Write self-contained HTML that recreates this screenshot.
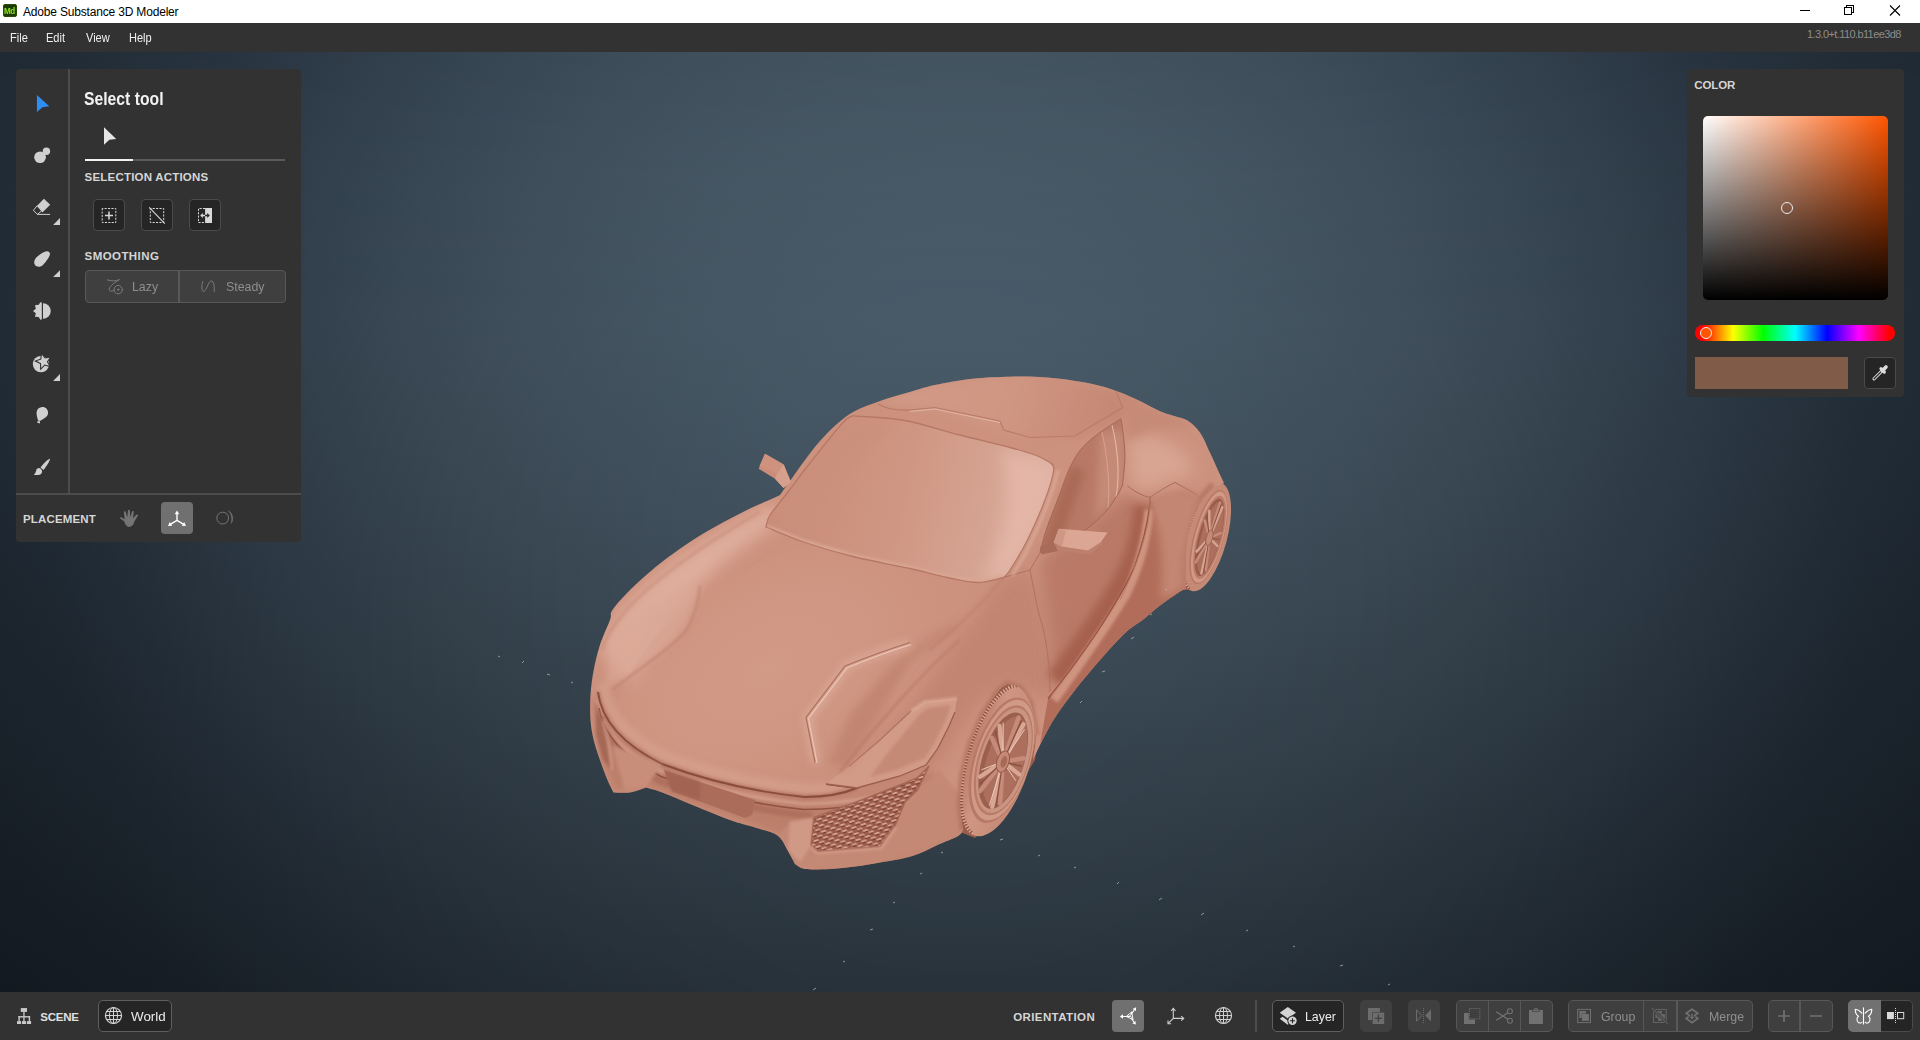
<!DOCTYPE html>
<html lang="en">
<head>
<meta charset="utf-8">
<title>Adobe Substance 3D Modeler</title>
<style>
*{box-sizing:border-box;margin:0;padding:0}
html,body{width:1920px;height:1040px;overflow:hidden;background:#323232;font-family:"Liberation Sans",sans-serif;}
body{position:relative}
.abs{position:absolute}
#titlebar{position:absolute;left:0;top:0;width:1920px;height:23px;background:#fff}
#titlebar .ttl{position:absolute;left:23px;top:4.5px;font-size:12px;line-height:14px;color:#000;white-space:nowrap;letter-spacing:-0.18px}
#menubar{position:absolute;left:0;top:23px;width:1920px;height:29px;background:#323232}
#menubar span{position:absolute;top:7.5px;font-size:12px;line-height:14px;color:#f0f0f0;white-space:nowrap;transform-origin:0 50%;transform:scaleX(0.92)}
#viewport{position:absolute;left:0;top:52px;width:1920px;height:940px;overflow:hidden;
 background:linear-gradient(to bottom,rgb(233,233,233) 0px,rgb(246,246,246) 120px,rgb(255,255,255) 280px),radial-gradient(circle 1200px at 960px 470px,rgb(255,255,255) 0px,rgb(246,246,246) 200px,rgb(237,237,237) 300px,rgb(226,226,226) 400px,rgb(212,212,212) 500px,rgb(191,194,197) 600px,rgb(169,173,180) 700px,rgb(145,150,159) 800px,rgb(121,128,137) 900px,rgb(108,115,125) 1000px,rgb(98,105,114) 1100px,rgb(91,97,106) 1200px),linear-gradient(to bottom,#566b7b 0%,#2f3b45 100%);background-blend-mode:multiply}
#bottombar{position:absolute;left:0;top:992px;width:1920px;height:48px;background:#323232}
.panel{position:absolute;background:#323232;border-radius:4px}
.lbl{position:absolute;font-weight:bold;font-size:11.5px;line-height:12px;letter-spacing:0px;color:#d6d6d6;white-space:nowrap}
.btn{position:absolute;width:32px;height:32px;border-radius:4px;background:#252525;border:1px solid #4b4b4b}
.seg{position:absolute;height:32px;background:#3f3f3f;border:1px solid #585858;border-radius:4px}
.txt{position:absolute;font-size:13px;line-height:16px;white-space:nowrap;transform-origin:0 50%;transform:scaleX(0.95)}
svg{position:absolute;overflow:visible}
</style>
</head>
<body>
<div id="titlebar">
  <div class="abs" style="left:3px;top:4px;width:14px;height:13px;border-radius:2px;background:#1c3a02;border:1px solid #2a4a08"></div>
  <div class="abs" style="left:4.3px;top:5.5px;font-size:8.5px;line-height:10px;font-weight:bold;color:#8fe31f;letter-spacing:-0.5px;transform-origin:0 50%;transform:scaleX(0.95)">Md</div>
  <div class="ttl">Adobe Substance 3D Modeler</div>
</div>
<div id="menubar">
  <span style="left:10px">File</span><span style="left:46px">Edit</span><span style="left:86px">View</span><span style="left:129px">Help</span>
  <span id="ver" style="left:1807px;top:4px;font-size:11px;color:#8c8c8c;letter-spacing:-0.6px;transform:none">1.3.0+t.110.b11ee3d8</span>
</div>
<div id="viewport">
<!--CAR-->
<svg id="car" width="1920" height="1040" viewBox="0 0 1920 1040" style="left:0;top:-52px">
<defs>
<filter id="b4" x="-20%" y="-20%" width="140%" height="140%"><feGaussianBlur stdDeviation="4"/></filter>
<filter id="b8" x="-30%" y="-30%" width="160%" height="160%"><feGaussianBlur stdDeviation="8"/></filter>
<filter id="b14" x="-40%" y="-40%" width="180%" height="180%"><feGaussianBlur stdDeviation="14"/></filter>
<filter id="b2" x="-20%" y="-20%" width="140%" height="140%"><feGaussianBlur stdDeviation="1.6"/></filter>
<clipPath id="bodyclip"><path d="M780.0 495.0C781.7 492.7 785.8 486.8 790.0 481.0C794.2 475.2 800.0 466.7 805.0 460.0C810.0 453.3 814.6 447.1 820.0 441.0C825.4 434.9 831.7 428.5 837.5 423.5C843.3 418.5 847.9 414.8 855.0 411.0C862.1 407.2 870.8 404.2 880.0 401.0C889.2 397.8 900.8 394.7 910.0 392.0C919.2 389.3 924.6 387.2 935.0 385.0C945.4 382.8 960.0 380.1 972.5 378.7C985.0 377.3 999.6 377.0 1010.0 376.7C1020.4 376.4 1026.7 376.4 1035.0 376.7C1043.3 377.0 1051.7 377.7 1060.0 378.7C1068.3 379.7 1076.7 380.8 1085.0 382.5C1093.3 384.2 1101.7 386.0 1110.0 388.7C1118.3 391.4 1126.7 394.9 1135.0 398.7C1143.3 402.4 1153.3 408.3 1160.0 411.2C1166.7 414.1 1170.4 414.6 1175.0 416.2C1179.6 417.8 1183.3 417.8 1187.5 420.5C1191.7 423.2 1196.2 427.2 1200.0 432.5C1203.8 437.8 1207.2 446.6 1210.0 452.5C1212.8 458.4 1214.7 462.9 1217.0 468.0C1219.3 473.1 1222.8 480.5 1224.0 483.0C1222.7 483.7 1219.5 484.3 1216.0 487.0C1212.5 489.7 1207.1 493.3 1203.0 499.0C1198.9 504.7 1194.2 513.2 1191.5 521.0C1188.8 528.8 1187.5 537.7 1186.5 546.0C1185.5 554.3 1185.6 563.8 1185.5 571.0C1185.4 578.2 1185.9 586.0 1186.0 589.0C1185.0 589.4 1184.3 588.8 1180.0 591.5C1175.7 594.2 1166.2 600.8 1160.0 605.5C1153.8 610.2 1148.3 615.4 1142.5 620.0C1136.7 624.6 1132.1 626.3 1125.0 633.0C1117.9 639.7 1108.3 650.5 1100.0 660.0C1091.7 669.5 1082.5 680.4 1075.0 690.0C1067.5 699.6 1060.4 709.2 1055.0 717.5C1049.6 725.8 1046.2 732.9 1042.5 740.0C1038.8 747.1 1034.6 756.7 1033.0 760.0C1033.5 755.0 1036.5 739.6 1036.0 730.0C1035.5 720.4 1032.7 709.5 1030.0 702.5C1027.3 695.5 1023.8 691.1 1020.0 688.0C1016.2 684.9 1009.6 684.7 1007.5 684.0C1006.1 685.1 1003.2 685.3 999.0 690.5C994.8 695.7 987.3 705.9 982.5 715.0C977.7 724.1 973.3 735.0 970.0 745.0C966.7 755.0 964.2 765.0 962.5 775.0C960.8 785.0 959.9 795.8 960.0 805.0C960.1 814.2 962.5 825.8 963.0 830.0C962.2 831.0 962.2 833.5 958.0 836.0C953.8 838.5 945.1 841.7 937.5 845.0C929.9 848.3 922.1 853.1 912.5 856.0C902.9 858.9 889.6 860.8 880.0 862.5C870.4 864.2 863.3 865.4 855.0 866.5C846.7 867.6 838.3 868.6 830.0 869.0C821.7 869.4 810.8 869.8 805.0 869.0C799.2 868.2 796.7 864.8 795.0 864.0C793.8 861.7 790.4 854.8 787.5 850.0C784.6 845.2 782.9 839.2 777.5 835.5C772.1 831.8 762.9 830.1 755.0 827.5C747.1 824.9 740.4 823.8 730.0 820.0C719.6 816.2 703.8 809.6 692.5 805.0C681.2 800.4 670.2 795.4 662.5 792.5C654.8 789.6 648.8 788.3 646.0 787.5C643.3 788.3 635.4 791.7 630.0 792.5C624.6 793.3 616.2 792.5 613.5 792.5C612.5 790.4 609.8 785.4 607.5 780.0C605.2 774.6 602.3 766.7 600.0 760.0C597.7 753.3 595.3 746.7 593.7 740.0C592.1 733.3 591.0 727.5 590.5 720.0C590.0 712.5 590.0 703.3 590.5 695.0C591.0 686.7 592.1 678.3 593.7 670.0C595.3 661.7 597.3 653.3 600.0 645.0C602.7 636.7 607.9 625.8 610.0 620.0C612.1 614.2 609.2 615.0 612.5 610.0C615.8 605.0 622.9 597.1 630.0 590.0C637.1 582.9 646.7 574.4 655.0 567.5C663.3 560.6 671.7 554.5 680.0 548.7C688.3 542.9 696.7 537.5 705.0 532.5C713.3 527.5 721.7 523.1 730.0 518.7C738.3 514.3 747.5 509.7 755.0 506.2C762.5 502.7 770.8 499.4 775.0 497.5C779.2 495.6 779.2 495.4 780.0 495.0Z"/></clipPath>
<clipPath id="windclip"><path d="M766.0 527.0C766.7 525.0 766.3 520.8 770.0 515.0C773.7 509.2 781.3 500.7 788.0 492.0C794.7 483.3 800.5 474.9 810.0 463.0C819.5 451.1 837.1 428.3 845.0 420.5C852.9 412.7 855.4 416.9 857.5 416.2C862.1 416.5 876.2 417.1 885.0 418.0C893.8 418.9 897.5 418.7 910.0 421.5C922.5 424.3 943.3 430.7 960.0 435.0C976.7 439.3 997.5 444.2 1010.0 447.5C1022.5 450.8 1028.3 452.5 1035.0 455.0C1041.7 457.5 1047.5 461.2 1050.0 462.5C1050.6 463.8 1054.5 463.8 1053.7 470.0C1052.9 476.2 1049.4 488.3 1045.0 500.0C1040.6 511.7 1033.3 528.3 1027.5 540.0C1021.7 551.7 1014.0 563.8 1010.0 570.0C1006.0 576.2 1004.8 576.2 1003.7 577.5C999.3 578.3 986.9 582.5 977.5 582.5C968.1 582.5 958.8 579.8 947.5 577.5C936.2 575.2 925.4 571.9 910.0 568.5C894.6 565.1 872.5 561.3 855.0 557.0C837.5 552.7 819.8 547.5 805.0 542.5C790.2 537.5 772.5 529.6 766.0 527.0Z"/></clipPath>
<clipPath id="winclip"><path d="M1121.0 418.7C1117.5 421.0 1106.4 427.7 1100.0 432.5C1093.6 437.3 1087.5 441.7 1082.5 447.5C1077.5 453.3 1074.2 458.8 1070.0 467.5C1065.8 476.2 1061.5 489.6 1057.5 500.0C1053.5 510.4 1049.1 521.2 1046.2 530.0C1043.3 538.8 1041.0 548.8 1040.0 552.5C1042.5 551.2 1047.5 548.8 1055.0 545.0C1062.5 541.2 1076.7 535.4 1085.0 530.0C1093.3 524.6 1099.6 518.3 1105.0 512.5C1110.4 506.7 1114.6 499.6 1117.5 495.0C1120.4 490.4 1121.7 486.7 1122.5 485.0C1122.9 480.4 1124.9 466.2 1125.0 457.5C1125.1 448.8 1123.7 439.0 1123.0 432.5C1122.3 426.0 1121.3 421.0 1121.0 418.7Z"/></clipPath>
<pattern id="mesh" width="10" height="6.400" patternUnits="userSpaceOnUse" patternTransform="rotate(-19)">
<rect width="10" height="6.400" fill="#9c5d4c"/>
<path d="M0.500 1.300h4.500M5.500 4.500h4.500" stroke="#dfae9b" stroke-width="1.700"/>
<path d="M0.500 2.800h4.500M5.500 6h4.500" stroke="#713b2c" stroke-width="1.200"/>
<path d="M5.200 0.500v2.700M0.200 3.700v2.700" stroke="#c98f7b" stroke-width="0.900"/>
</pattern>
<radialGradient id="hoodg" cx="0.450" cy="0.450" r="0.600"><stop offset="0" stop-color="#d29b87"/><stop offset="0.500" stop-color="#d09884" stop-opacity="0.8"/><stop offset="1" stop-color="#cc927e" stop-opacity="0"/></radialGradient>
<linearGradient id="windg" gradientUnits="userSpaceOnUse" x1="790" y1="470" x2="1040" y2="530"><stop offset="0" stop-color="#c98d79"/><stop offset="0.450" stop-color="#cf9783"/><stop offset="0.800" stop-color="#d6a493"/><stop offset="1" stop-color="#dfb2a3"/></linearGradient>
<linearGradient id="roofg" gradientUnits="userSpaceOnUse" x1="900" y1="380" x2="1120" y2="440"><stop offset="0" stop-color="#d29b87"/><stop offset="0.500" stop-color="#cf9682"/><stop offset="1" stop-color="#c38672"/></linearGradient>
<linearGradient id="tireg" x1="0" y1="0" x2="1" y2="0"><stop offset="0" stop-color="#b97b68"/><stop offset="0.350" stop-color="#cf9783"/><stop offset="1" stop-color="#c38672"/></linearGradient>
</defs>
<path d="M1224 483L1213 484L1196 500L1186 530L1183 560L1185 590L1200 590L1215 560L1226 510Z" fill="#96594a"/>
<path d="M1007 683L1031 690L1041 720L1035 760L1010 800L975 838L960 832L957 800L961 770L969 742L981 714L998 689Z" fill="#9a5d4c"/>
<g transform="translate(2 0) rotate(15 1204.500 537)">
<ellipse cx="1204.500" cy="537" rx="20.500" ry="56" fill="#c58a76"/>
<clipPath id="treadclip2"><rect x="1180" y="478" width="22" height="120"/></clipPath>
<g clip-path="url(#treadclip2)">
<ellipse cx="1204.500" cy="537" rx="19.500" ry="55" fill="none" stroke="#8d5141" stroke-width="2.600" stroke-dasharray="1.200 1.500"/>
<ellipse cx="1204.500" cy="537" rx="19.500" ry="55" fill="none" stroke="#dfb09f" stroke-width="2.600" stroke-dasharray="0.600 2.100" stroke-dashoffset="-1.400"/>
</g>
<ellipse cx="1206.500" cy="536.500" rx="15" ry="48.500" fill="#b67865"/>
<ellipse cx="1207" cy="536.500" rx="14" ry="47" fill="#d09a86"/>
<ellipse cx="1207.500" cy="536.500" rx="12.500" ry="43" fill="#bb7d6a"/>
<ellipse cx="1207.500" cy="536.500" rx="11" ry="40" fill="#9a5d4c"/>
<ellipse cx="1208.500" cy="536.500" rx="9.500" ry="37" fill="#ad6f5d"/>
<path d="M1207.5 537L1208.6 500.2" stroke="#c58b78" stroke-width="2.6" stroke-linecap="round" fill="none"/>
<path d="M1207.5 537L1212.1 504.1" stroke="#d6a592" stroke-width="2.4" stroke-linecap="round" fill="none"/>
<path d="M1207.5 537L1210.4 501.6" stroke="#8a4e3e" stroke-width="0.900" fill="none"/>
<path d="M1207.5 537L1217.3 529.6" stroke="#c58b78" stroke-width="2.6" stroke-linecap="round" fill="none"/>
<path d="M1207.5 537L1217.4 542.9" stroke="#d6a592" stroke-width="2.4" stroke-linecap="round" fill="none"/>
<path d="M1207.5 537L1217.5 536.3" stroke="#8a4e3e" stroke-width="0.900" fill="none"/>
<path d="M1207.5 537L1212.4 569.2" stroke="#c58b78" stroke-width="2.6" stroke-linecap="round" fill="none"/>
<path d="M1207.5 537L1209.0 573.6" stroke="#d6a592" stroke-width="2.4" stroke-linecap="round" fill="none"/>
<path d="M1207.5 537L1210.8 572.0" stroke="#8a4e3e" stroke-width="0.900" fill="none"/>
<path d="M1207.5 537L1200.7 564.3" stroke="#c58b78" stroke-width="2.6" stroke-linecap="round" fill="none"/>
<path d="M1207.5 537L1198.6 553.7" stroke="#d6a592" stroke-width="2.4" stroke-linecap="round" fill="none"/>
<path d="M1207.5 537L1199.5 559.3" stroke="#8a4e3e" stroke-width="0.900" fill="none"/>
<path d="M1207.5 537L1198.4 521.6" stroke="#c58b78" stroke-width="2.6" stroke-linecap="round" fill="none"/>
<path d="M1207.5 537L1200.4 510.8" stroke="#d6a592" stroke-width="2.4" stroke-linecap="round" fill="none"/>
<path d="M1207.5 537L1199.3 515.9" stroke="#8a4e3e" stroke-width="0.900" fill="none"/>
<ellipse cx="1207.5" cy="537" rx="3.200" ry="8" fill="#c48a76" stroke="#96594a" stroke-width="0.800"/>
</g>
<g transform="rotate(17 997.500 760.500)">
<ellipse cx="998" cy="760" rx="32" ry="79" fill="url(#tireg)"/>
<clipPath id="treadclip"><rect x="955" y="680" width="40" height="160"/></clipPath>
<g clip-path="url(#treadclip)">
<ellipse cx="998" cy="760" rx="30.500" ry="77.500" fill="none" stroke="#8d5141" stroke-width="3.500" stroke-dasharray="1.300 1.700"/>
<ellipse cx="998" cy="760" rx="30.500" ry="77.500" fill="none" stroke="#e0b2a1" stroke-width="3.500" stroke-dasharray="0.700 2.300" stroke-dashoffset="-1.500"/>
</g>
<ellipse cx="1001.500" cy="759" rx="28.500" ry="65" fill="#b87a67"/>
<ellipse cx="1002.500" cy="758.500" rx="27" ry="62.500" fill="#d09a86"/>
<ellipse cx="1003" cy="758.500" rx="25.500" ry="57" fill="#b97b68"/>
<ellipse cx="1003.500" cy="758.500" rx="24" ry="54.500" fill="#c99480"/>
<ellipse cx="1003" cy="759" rx="21" ry="50" fill="#9c5f4e"/>
<ellipse cx="1005" cy="759" rx="18.500" ry="46.500" fill="#ad6f5d"/>
<path d="M1003 760L1005.2 713.3" stroke="#c58b78" stroke-width="4.5" stroke-linecap="round" fill="none"/>
<path d="M1003 760L1011.9 718.2" stroke="#d8a794" stroke-width="4.2" stroke-linecap="round" fill="none"/>
<path d="M1003 760L1008.7 715.0" stroke="#8a4e3e" stroke-width="1.300" fill="none"/>
<path d="M1003 760L1014.3 722.9" stroke="#edc9bc" stroke-width="0.900" fill="none"/>
<path d="M1003 760L1022.1 750.7" stroke="#c58b78" stroke-width="4.5" stroke-linecap="round" fill="none"/>
<path d="M1003 760L1022.3 767.5" stroke="#d8a794" stroke-width="4.2" stroke-linecap="round" fill="none"/>
<path d="M1003 760L1022.5 759.1" stroke="#8a4e3e" stroke-width="1.300" fill="none"/>
<path d="M1003 760L1021.0 774.5" stroke="#edc9bc" stroke-width="0.900" fill="none"/>
<path d="M1003 760L1012.6 800.9" stroke="#c58b78" stroke-width="4.5" stroke-linecap="round" fill="none"/>
<path d="M1003 760L1006.0 806.4" stroke="#d8a794" stroke-width="4.2" stroke-linecap="round" fill="none"/>
<path d="M1003 760L1009.4 804.4" stroke="#8a4e3e" stroke-width="1.300" fill="none"/>
<path d="M1003 760L1002.9 806.0" stroke="#edc9bc" stroke-width="0.900" fill="none"/>
<path d="M1003 760L989.8 794.6" stroke="#c58b78" stroke-width="4.5" stroke-linecap="round" fill="none"/>
<path d="M1003 760L985.6 781.2" stroke="#d8a794" stroke-width="4.2" stroke-linecap="round" fill="none"/>
<path d="M1003 760L987.5 788.4" stroke="#8a4e3e" stroke-width="1.300" fill="none"/>
<path d="M1003 760L984.9 774.0" stroke="#edc9bc" stroke-width="0.900" fill="none"/>
<path d="M1003 760L985.3 740.5" stroke="#c58b78" stroke-width="4.5" stroke-linecap="round" fill="none"/>
<path d="M1003 760L989.3 726.7" stroke="#d8a794" stroke-width="4.2" stroke-linecap="round" fill="none"/>
<path d="M1003 760L987.0 733.1" stroke="#8a4e3e" stroke-width="1.300" fill="none"/>
<path d="M1003 760L991.9 722.6" stroke="#edc9bc" stroke-width="0.900" fill="none"/>
<ellipse cx="1003" cy="760" rx="6" ry="11" fill="#c48a76" stroke="#96594a" stroke-width="1"/>
<ellipse cx="1004" cy="760" rx="3" ry="6" fill="#a86a58"/>
</g>
<path d="M780.0 495.0C781.7 492.7 785.8 486.8 790.0 481.0C794.2 475.2 800.0 466.7 805.0 460.0C810.0 453.3 814.6 447.1 820.0 441.0C825.4 434.9 831.7 428.5 837.5 423.5C843.3 418.5 847.9 414.8 855.0 411.0C862.1 407.2 870.8 404.2 880.0 401.0C889.2 397.8 900.8 394.7 910.0 392.0C919.2 389.3 924.6 387.2 935.0 385.0C945.4 382.8 960.0 380.1 972.5 378.7C985.0 377.3 999.6 377.0 1010.0 376.7C1020.4 376.4 1026.7 376.4 1035.0 376.7C1043.3 377.0 1051.7 377.7 1060.0 378.7C1068.3 379.7 1076.7 380.8 1085.0 382.5C1093.3 384.2 1101.7 386.0 1110.0 388.7C1118.3 391.4 1126.7 394.9 1135.0 398.7C1143.3 402.4 1153.3 408.3 1160.0 411.2C1166.7 414.1 1170.4 414.6 1175.0 416.2C1179.6 417.8 1183.3 417.8 1187.5 420.5C1191.7 423.2 1196.2 427.2 1200.0 432.5C1203.8 437.8 1207.2 446.6 1210.0 452.5C1212.8 458.4 1214.7 462.9 1217.0 468.0C1219.3 473.1 1222.8 480.5 1224.0 483.0C1222.7 483.7 1219.5 484.3 1216.0 487.0C1212.5 489.7 1207.1 493.3 1203.0 499.0C1198.9 504.7 1194.2 513.2 1191.5 521.0C1188.8 528.8 1187.5 537.7 1186.5 546.0C1185.5 554.3 1185.6 563.8 1185.5 571.0C1185.4 578.2 1185.9 586.0 1186.0 589.0C1185.0 589.4 1184.3 588.8 1180.0 591.5C1175.7 594.2 1166.2 600.8 1160.0 605.5C1153.8 610.2 1148.3 615.4 1142.5 620.0C1136.7 624.6 1132.1 626.3 1125.0 633.0C1117.9 639.7 1108.3 650.5 1100.0 660.0C1091.7 669.5 1082.5 680.4 1075.0 690.0C1067.5 699.6 1060.4 709.2 1055.0 717.5C1049.6 725.8 1046.2 732.9 1042.5 740.0C1038.8 747.1 1034.6 756.7 1033.0 760.0C1033.5 755.0 1036.5 739.6 1036.0 730.0C1035.5 720.4 1032.7 709.5 1030.0 702.5C1027.3 695.5 1023.8 691.1 1020.0 688.0C1016.2 684.9 1009.6 684.7 1007.5 684.0C1006.1 685.1 1003.2 685.3 999.0 690.5C994.8 695.7 987.3 705.9 982.5 715.0C977.7 724.1 973.3 735.0 970.0 745.0C966.7 755.0 964.2 765.0 962.5 775.0C960.8 785.0 959.9 795.8 960.0 805.0C960.1 814.2 962.5 825.8 963.0 830.0C962.2 831.0 962.2 833.5 958.0 836.0C953.8 838.5 945.1 841.7 937.5 845.0C929.9 848.3 922.1 853.1 912.5 856.0C902.9 858.9 889.6 860.8 880.0 862.5C870.4 864.2 863.3 865.4 855.0 866.5C846.7 867.6 838.3 868.6 830.0 869.0C821.7 869.4 810.8 869.8 805.0 869.0C799.2 868.2 796.7 864.8 795.0 864.0C793.8 861.7 790.4 854.8 787.5 850.0C784.6 845.2 782.9 839.2 777.5 835.5C772.1 831.8 762.9 830.1 755.0 827.5C747.1 824.9 740.4 823.8 730.0 820.0C719.6 816.2 703.8 809.6 692.5 805.0C681.2 800.4 670.2 795.4 662.5 792.5C654.8 789.6 648.8 788.3 646.0 787.5C643.3 788.3 635.4 791.7 630.0 792.5C624.6 793.3 616.2 792.5 613.5 792.5C612.5 790.4 609.8 785.4 607.5 780.0C605.2 774.6 602.3 766.7 600.0 760.0C597.7 753.3 595.3 746.7 593.7 740.0C592.1 733.3 591.0 727.5 590.5 720.0C590.0 712.5 590.0 703.3 590.5 695.0C591.0 686.7 592.1 678.3 593.7 670.0C595.3 661.7 597.3 653.3 600.0 645.0C602.7 636.7 607.9 625.8 610.0 620.0C612.1 614.2 609.2 615.0 612.5 610.0C615.8 605.0 622.9 597.1 630.0 590.0C637.1 582.9 646.7 574.4 655.0 567.5C663.3 560.6 671.7 554.5 680.0 548.7C688.3 542.9 696.7 537.5 705.0 532.5C713.3 527.5 721.7 523.1 730.0 518.7C738.3 514.3 747.5 509.7 755.0 506.2C762.5 502.7 770.8 499.4 775.0 497.5C779.2 495.6 779.2 495.4 780.0 495.0Z" fill="#cc927e"/>
<g clip-path="url(#bodyclip)">
<path d="M600 650C615 600 680 550 770 505L790 515C720 560 660 610 640 690Z" fill="#dfae9c" filter="url(#b8)"/>
<ellipse cx="790" cy="670" rx="190" ry="110" transform="rotate(-28 790 670)" fill="url(#hoodg)"/>
<path d="M700 585C695 610 685 635 660 655C640 668 620 680 605 690L612 640C640 610 670 590 700 585Z" fill="#dba896" filter="url(#b4)" opacity="0.7"/>
<path d="M1003 578L1030 570L1040 600L1050 660L1050 700L1010 684L980 700L940 760L900 790L830 800L900 720L960 640Z" fill="#c08370" filter="url(#b8)" opacity="0.85"/>
<path d="M1040 560L1125 495L1150 497L1146 530L1135 566L1120 595L1096 633L1072 670L1050 698L1050 640Z" fill="#b97966" filter="url(#b8)"/>
<path d="M1146 505C1146 530 1138 560 1122 588C1108 612 1085 645 1058 682" fill="none" stroke="#a6614d" stroke-width="26" filter="url(#b4)"/>
<path d="M1152 500L1185 492L1200 498L1186 545L1184 590L1160 603L1140 625L1135 580Z" fill="#bb7b67" filter="url(#b4)"/>
<path d="M1165 560L1184 548L1184 590L1160 604Z" fill="#a8634f" filter="url(#b4)"/>
<path d="M1150 497L1144 530L1135 566L1120 595L1096 633L1072 670L1048 699L1040 745L1060 722L1085 692L1113 661L1140 629L1164 602L1186 590L1175 560Z" fill="#b16d59"/>
<path d="M1149 510C1147 535 1140 566 1126 594C1112 618 1090 650 1054 700" fill="none" stroke="#cf9480" stroke-width="9" filter="url(#b2)"/>
<path d="M1150.300 496.500C1149 520 1144 540 1134.700 566.200C1128 582 1118 600 1096.200 633.500C1085 650 1072 669 1048 698.500" fill="none" stroke="#96523f" stroke-width="1.300"/>
<path d="M1130 440C1150 430 1180 440 1195 470C1185 480 1160 480 1140 495C1130 480 1128 455 1130 440Z" fill="#d8a592" filter="url(#b8)"/>
<path d="M880 401L935 385L1010 376L1085 382L1135 398L1122 420L1075 440L1030 440L1003 430L935 408Z" fill="url(#roofg)" filter="url(#b4)"/>
<path d="M1116 391L1135 398L1175 416L1195 428L1150 430L1127 440L1122.500 407.500Z" fill="#c68b77" filter="url(#b4)"/>
<path d="M590 700L600 760L614 793L646 788L700 808L780 836L796 865L830 869L900 860L960 836L960 800L930 770L900 790L830 800L760 796L700 782L650 760L610 730L598 700Z" fill="#bc7f6b" filter="url(#b4)"/>
<path d="M602 684C606 716 633 740 665 756C707 772 757 784 806 789C830 789 845 785 857 780" stroke="#dcab98" stroke-width="6" fill="none" filter="url(#b4)" opacity="0.8"/>
<path d="M598 692C602 725 630 748 662 764C705 780 755 792 805 797C830 797 845 793 857 788" stroke="#a66856" stroke-width="3.500" fill="none" filter="url(#b2)" opacity="0.7"/>
<path d="M597 700C601 733 629 756 661 771C704 787 754 799 804 804C840 804 870 799 900 790" stroke="#dba996" stroke-width="2.200" fill="none" filter="url(#b2)"/>
<path d="M601 716C607 746 633 767 663 782C705 798 755 810 805 815L812 816" stroke="#ad6e5b" stroke-width="7" fill="none" filter="url(#b2)" opacity="0.9"/>
<path d="M598 692C602 725 630 748 662 764C705 780 755 792 805 797C830 797 845 793 857 788L826 784" stroke="#8a4d3c" stroke-width="1.900" fill="none"/>
<path d="M599 708C604 740 631 761 661 776.500C704 792.500 754 804.500 804 809.500C830 809.500 850 807.500 875 801" stroke="#8f5241" stroke-width="1.500" fill="none"/>
<path d="M664 770L755 800L752 815L745 818L672 791Z" fill="#ab6c5a"/>
<path d="M664 770L700 782L700 800L672 791Z" fill="#a36453" filter="url(#b2)"/>
<path d="M596 700L607 738L612 770L603 760L596 735Z" fill="#a56755" filter="url(#b2)"/>
<path d="M603 720L609 745L612 770" stroke="#dfb09e" stroke-width="1.500" fill="none" filter="url(#b2)"/>
<path d="M612 745L625 790L646 787L662 765Z" fill="#c88e7a" filter="url(#b2)"/>
<path d="M778 836L796 865L830 869L880 862L905 855L960 835L962 800L940 770L905 800L895 826L880 847L818 852L811 845L813 818L790 822Z" fill="#c48975" filter="url(#b2)"/>
<path d="M790 822L813 818L811 845L800 862L788 850Z" fill="#d09986" filter="url(#b2)"/>
<path d="M814 817.500L855 802.500L905 783L917 778L929 766L917.500 790L905 802L895 826L880 846.500L817.500 851.500L811 845Z" fill="url(#mesh)"/>
<path d="M814 817.500L855 802.500L905 783L917 778L929 766L917.500 790L905 802L895 826L880 846.500L817.500 851.500L811 845Z" fill="none" stroke="#a56755" stroke-width="1.400"/>
<path d="M811 846L817 853L881 848L896 827" fill="none" stroke="#dcab98" stroke-width="1.600" filter="url(#b2)"/>
<path d="M826 784L849 766.500L880 740L911 711L925 701.500L957 698L955 712L949 726L938 748L926 765L900 776L857 788Z" fill="#d29b87"/>
<path d="M911 711L925 701.500L957 698" fill="none" stroke="#e3b5a4" stroke-width="1.600" filter="url(#b2)"/>
<path d="M918 716L928 708L951 705L945 722L935 742L925 758L896 770L870 777L890 750Z" fill="#c58a76" filter="url(#b2)"/>
<path d="M826 784L857 788L900 776L926 765L938 748L949 726L955 712" fill="none" stroke="#9d5f4d" stroke-width="1.300"/>
<path d="M849 766.500L880 740L911 711" fill="none" stroke="#b07260" stroke-width="1.100"/>
<path d="M965 622L911 661L872 726L849 766L828 764L850 715L890 668L940 630Z" fill="#c08470" filter="url(#b4)" opacity="0.9"/>
<path d="M910 643C880 652 860 660 847 666L808 718L816 763" fill="none" stroke="#dcab99" stroke-width="9" filter="url(#b4)" opacity="0.85"/>
<path d="M910 642.500C880 652 860 660 845 666L806 717.500L815 762.500" fill="none" stroke="#ad6f5c" stroke-width="1.200"/>
<path d="M911 644.500C881 654 861 662 847 668L808.500 718.500L817 763" fill="none" stroke="#ecc6b8" stroke-width="1.200"/>
<path d="M960 640C930 665 880 720 840 772" fill="none" stroke="#b37561" stroke-width="1.600" filter="url(#b2)"/>
<path d="M1003 578C985 600 960 625 930 650" fill="none" stroke="#b37561" stroke-width="1.200" filter="url(#b2)" opacity="0.7"/>
<path d="M700 585C699 600 696 612 688 628C676 645 640 668 612 690" fill="none" stroke="#b97b68" stroke-width="1.400" filter="url(#b2)"/>
<path d="M602 650C612 615 660 570 760 512" fill="none" stroke="#b97c69" stroke-width="1.200" filter="url(#b2)" opacity="0.8"/>
<path d="M1036 735L1030 702.500L1020 688L1007.500 684L999 690.500L982.500 715L970 745L962.500 775L960 805L963 830" fill="none" stroke="#b27461" stroke-width="7" filter="url(#b2)" opacity="0.8"/>
<path d="M1184 590L1185.500 545L1190.500 520L1201 497.500L1213 484" fill="none" stroke="#b27461" stroke-width="6" filter="url(#b2)" opacity="0.8"/>
<path d="M1030 570C1034 590 1037 610 1043 628C1048 650 1050 672 1050 692" fill="none" stroke="#b07260" stroke-width="1"/>
<path d="M1003.700 577.500L1030 570L1040 553" fill="none" stroke="#b07260" stroke-width="1"/>
<path d="M1127.500 486C1135 492 1143 496 1150 497.500C1158 492 1167 486 1175 482.500L1197.500 495" fill="none" stroke="#a96b59" stroke-width="1"/>
<path d="M1150 497.500C1152 520 1140 560 1120 600" fill="none" stroke="#b47663" stroke-width="1" opacity="0.8"/>
<path d="M1150 500C1165 490 1185 490 1200 497L1186 545L1184 590L1160 600C1165 560 1160 530 1150 500Z" fill="#c38672" filter="url(#b4)"/>
</g>
<path d="M766.0 527.0C766.7 525.0 766.3 520.8 770.0 515.0C773.7 509.2 781.3 500.7 788.0 492.0C794.7 483.3 800.5 474.9 810.0 463.0C819.5 451.1 837.1 428.3 845.0 420.5C852.9 412.7 855.4 416.9 857.5 416.2C862.1 416.5 876.2 417.1 885.0 418.0C893.8 418.9 897.5 418.7 910.0 421.5C922.5 424.3 943.3 430.7 960.0 435.0C976.7 439.3 997.5 444.2 1010.0 447.5C1022.5 450.8 1028.3 452.5 1035.0 455.0C1041.7 457.5 1047.5 461.2 1050.0 462.5C1050.6 463.8 1054.5 463.8 1053.7 470.0C1052.9 476.2 1049.4 488.3 1045.0 500.0C1040.6 511.7 1033.3 528.3 1027.5 540.0C1021.7 551.7 1014.0 563.8 1010.0 570.0C1006.0 576.2 1004.8 576.2 1003.7 577.5C999.3 578.3 986.9 582.5 977.5 582.5C968.1 582.5 958.8 579.8 947.5 577.5C936.2 575.2 925.4 571.9 910.0 568.5C894.6 565.1 872.5 561.3 855.0 557.0C837.5 552.7 819.8 547.5 805.0 542.5C790.2 537.5 772.5 529.6 766.0 527.0Z" fill="url(#windg)"/>
<g clip-path="url(#windclip)">
<path d="M1000 450C1030 455 1050 465 1053 472L1040 520L1010 575L985 582C1005 540 1015 500 1000 450Z" fill="#e3b6a7" filter="url(#b8)"/>
<path d="M770 515L850 420L900 420C860 450 820 500 800 545Z" fill="#ca907c" filter="url(#b8)"/>
<path d="M766 527L805 542.500L855 557L910 568.500L947.500 577.500L977.500 582.500L1003.700 577.500" fill="none" stroke="#d9a793" stroke-width="5" filter="url(#b2)"/>
</g>
<path d="M766.0 527.0C766.7 525.0 766.3 520.8 770.0 515.0C773.7 509.2 781.3 500.7 788.0 492.0C794.7 483.3 800.5 474.9 810.0 463.0C819.5 451.1 837.1 428.3 845.0 420.5C852.9 412.7 855.4 416.9 857.5 416.2C862.1 416.5 876.2 417.1 885.0 418.0C893.8 418.9 897.5 418.7 910.0 421.5C922.5 424.3 943.3 430.7 960.0 435.0C976.7 439.3 997.5 444.2 1010.0 447.5C1022.5 450.8 1028.3 452.5 1035.0 455.0C1041.7 457.5 1047.5 461.2 1050.0 462.5C1050.6 463.8 1054.5 463.8 1053.7 470.0C1052.9 476.2 1049.4 488.3 1045.0 500.0C1040.6 511.7 1033.3 528.3 1027.5 540.0C1021.7 551.7 1014.0 563.8 1010.0 570.0C1006.0 576.2 1004.8 576.2 1003.7 577.5C999.3 578.3 986.9 582.5 977.5 582.5C968.1 582.5 958.8 579.8 947.5 577.5C936.2 575.2 925.4 571.9 910.0 568.5C894.6 565.1 872.5 561.3 855.0 557.0C837.5 552.7 819.8 547.5 805.0 542.5C790.2 537.5 772.5 529.6 766.0 527.0Z" fill="none" stroke="#b67865" stroke-width="1.300"/>
<path d="M1058 470C1052 495 1040 525 1024 556L1012 576" fill="none" stroke="#e0b1a0" stroke-width="2" filter="url(#b2)"/>
<path d="M878 404C888 410 900 410.500 910 410L935 407.500L1000 421L1003.700 430L1030 437.500L1075 436L1122.500 407.500L1116 391" fill="none" stroke="#b97b68" stroke-width="1.100"/>
<path d="M910 411.500L935 409L1000 422.500" fill="none" stroke="#e3b8a8" stroke-width="0.900"/>
<path d="M1121.0 418.7C1117.5 421.0 1106.4 427.7 1100.0 432.5C1093.6 437.3 1087.5 441.7 1082.5 447.5C1077.5 453.3 1074.2 458.8 1070.0 467.5C1065.8 476.2 1061.5 489.6 1057.5 500.0C1053.5 510.4 1049.1 521.2 1046.2 530.0C1043.3 538.8 1041.0 548.8 1040.0 552.5C1042.5 551.2 1047.5 548.8 1055.0 545.0C1062.5 541.2 1076.7 535.4 1085.0 530.0C1093.3 524.6 1099.6 518.3 1105.0 512.5C1110.4 506.7 1114.6 499.6 1117.5 495.0C1120.4 490.4 1121.7 486.7 1122.5 485.0C1122.9 480.4 1124.9 466.2 1125.0 457.5C1125.1 448.8 1123.7 439.0 1123.0 432.5C1122.3 426.0 1121.3 421.0 1121.0 418.7Z" fill="#b87966"/>
<g clip-path="url(#winclip)">
<path d="M1070 467L1040 552L1060 545L1085 470Z" fill="#a96955" filter="url(#b4)"/>
<path d="M1100 432L1095 520L1125 490L1125 430Z" fill="#c58a76" filter="url(#b4)"/>
<path d="M1112 425C1118 450 1120 475 1116 497" fill="none" stroke="#e6bcae" stroke-width="1"/>
<path d="M1102 432C1108 460 1110 485 1108 508" fill="none" stroke="#dba997" stroke-width="0.800"/>
</g>
<path d="M1121.0 418.7C1117.5 421.0 1106.4 427.7 1100.0 432.5C1093.6 437.3 1087.5 441.7 1082.5 447.5C1077.5 453.3 1074.2 458.8 1070.0 467.5C1065.8 476.2 1061.5 489.6 1057.5 500.0C1053.5 510.4 1049.1 521.2 1046.2 530.0C1043.3 538.8 1041.0 548.8 1040.0 552.5C1042.5 551.2 1047.5 548.8 1055.0 545.0C1062.5 541.2 1076.7 535.4 1085.0 530.0C1093.3 524.6 1099.6 518.3 1105.0 512.5C1110.4 506.7 1114.6 499.6 1117.5 495.0C1120.4 490.4 1121.7 486.7 1122.5 485.0C1122.9 480.4 1124.9 466.2 1125.0 457.5C1125.1 448.8 1123.7 439.0 1123.0 432.5C1122.3 426.0 1121.3 421.0 1121.0 418.7Z" fill="none" stroke="#a66856" stroke-width="1"/>
<path d="M1040.0 547.0L1054.0 541.0L1058.0 551.0L1041.5 554.5Z" fill="#a96b59"/>
<path d="M1053.7 542.5L1062.0 546.5L1088.0 550.5L1101.0 542.0L1102.5 544.0L1090.0 554.5L1058.0 551.0Z" fill="#bd806d"/>
<path d="M1058.7 528.7L1107.5 532.5L1101.0 542.0L1088.0 550.5L1062.0 546.5L1053.7 542.5Z" fill="#dba794"/>
<path d="M1058.700 528.700L1053.700 542.500L1062 546.500L1066 531Z" fill="#cf9884"/>
<path d="M758.7 468.7L765.0 453.7L783.7 464.5L787.5 473.7L791.0 482.0L783.5 488.0L775.0 478.7Z" fill="#c98d79"/>
<path d="M765 453.700L783.700 464.500L777 474L759.500 466Z" fill="#cf927e"/>
<path d="M783.700 464.500L787.500 473.700L791 482L783.500 488L775 478.700L777 474Z" fill="#d7a08c"/>
<path d="M498 656l2 1" stroke="#aeb8c2" stroke-width="1" opacity="0.75"/>
<path d="M522 663l2 -2" stroke="#aeb8c2" stroke-width="1" opacity="0.75"/>
<path d="M547 674l3 1" stroke="#aeb8c2" stroke-width="1" opacity="0.75"/>
<path d="M571 683l2 -1" stroke="#aeb8c2" stroke-width="1" opacity="0.75"/>
<path d="M1150 615l2 -1" stroke="#aeb8c2" stroke-width="1" opacity="0.75"/>
<path d="M1131 639l3 -2" stroke="#aeb8c2" stroke-width="1" opacity="0.75"/>
<path d="M1102 672l3 -1" stroke="#aeb8c2" stroke-width="1" opacity="0.75"/>
<path d="M1080 703l2 -2" stroke="#aeb8c2" stroke-width="1" opacity="0.75"/>
<path d="M1040 855l-2 1" stroke="#aeb8c2" stroke-width="1" opacity="0.75"/>
<path d="M1000 840l3 -1" stroke="#aeb8c2" stroke-width="1" opacity="0.75"/>
<path d="M941 852l2 1" stroke="#aeb8c2" stroke-width="1" opacity="0.75"/>
<path d="M920 874l2 -1" stroke="#aeb8c2" stroke-width="1" opacity="0.75"/>
<path d="M895 902l-2 1" stroke="#aeb8c2" stroke-width="1" opacity="0.75"/>
<path d="M870 930l3 -1" stroke="#aeb8c2" stroke-width="1" opacity="0.75"/>
<path d="M843 961l2 1" stroke="#aeb8c2" stroke-width="1" opacity="0.75"/>
<path d="M813 990l3 -2" stroke="#aeb8c2" stroke-width="1" opacity="0.75"/>
<path d="M1076 867l-2 1" stroke="#aeb8c2" stroke-width="1" opacity="0.75"/>
<path d="M1117 884l2 -2" stroke="#aeb8c2" stroke-width="1" opacity="0.75"/>
<path d="M1159 900l3 -2" stroke="#aeb8c2" stroke-width="1" opacity="0.75"/>
<path d="M1201 915l3 -2" stroke="#aeb8c2" stroke-width="1" opacity="0.75"/>
<path d="M1246 931l2 -1" stroke="#aeb8c2" stroke-width="1" opacity="0.75"/>
<path d="M1293 946l2 1" stroke="#aeb8c2" stroke-width="1" opacity="0.75"/>
<path d="M1340 966l3 -1" stroke="#aeb8c2" stroke-width="1" opacity="0.75"/>
<path d="M1390 984l-2 1" stroke="#aeb8c2" stroke-width="1" opacity="0.75"/>
<path d="M1165 589l2 1" stroke="#aeb8c2" stroke-width="1" opacity="0.75"/>
</svg>
<!--/CAR-->
</div>
<!--LEFTPANEL-->
<div class="panel" style="left:16px;top:69px;width:285px;height:473px"></div>
<div class="abs" style="left:67.5px;top:69px;width:2px;height:424px;background:#4c4c4c"></div>
<div class="abs" style="left:16px;top:492.5px;width:285px;height:2px;background:#4c4c4c"></div>
<div id="seltool" class="abs" style="left:84px;top:88.3px;font-size:18.5px;line-height:22px;font-weight:bold;color:#f2f2f2;white-space:nowrap;transform-origin:0 50%;transform:scaleX(0.85)">Select tool</div>
<div class="abs" style="left:85px;top:159px;width:200px;height:2px;background:#5a5a5a"></div>
<div class="abs" style="left:85px;top:159px;width:48px;height:2px;background:#f2f2f2"></div>
<div id="l_sel" class="lbl" style="left:84.6px;top:170.8px;letter-spacing:0.2px">SELECTION ACTIONS</div>
<div class="btn" style="left:93px;top:199px"></div>
<div class="btn" style="left:141px;top:199px"></div>
<div class="btn" style="left:189px;top:199px"></div>
<div id="l_smo" class="lbl" style="left:84.6px;top:250.1px;letter-spacing:0.42px">SMOOTHING</div>
<div class="seg" style="left:85px;top:270px;width:201px;height:32.5px"></div>
<div class="abs" style="left:178px;top:270px;width:2px;height:32px;background:#585858"></div>
<div id="t_lazy" class="txt" style="left:131.6px;top:278.6px;color:#8e8e8e">Lazy</div>
<div id="t_steady" class="txt" style="left:225.6px;top:278.6px;color:#8e8e8e">Steady</div>
<div id="l_pla" class="lbl" style="left:23px;top:513px;letter-spacing:0.15px">PLACEMENT</div>
<div class="abs" style="left:161px;top:502px;width:32px;height:32px;border-radius:4px;background:#707070"></div>
<!--/LEFTPANEL-->
<!--COLORPANEL-->
<div class="panel" style="left:1687px;top:69px;width:217px;height:327.5px"></div>
<div id="l_col" class="lbl" style="left:1694.2px;top:79.1px;letter-spacing:-0.1px">COLOR</div>
<div class="abs" style="left:1703.4px;top:115.7px;width:184.6px;height:184.4px;border-radius:5px;background:linear-gradient(to bottom,rgba(0,0,0,0) 0%,#000 100%),linear-gradient(to right,#fff 0%,#ff5500 100%)"></div>
<div class="abs" style="left:1780.6px;top:202px;width:12.4px;height:12.4px;border-radius:50%;border:1.8px solid #ececec"></div>
<div class="abs" style="left:1695px;top:325px;width:200px;height:16px;border-radius:8px;background:linear-gradient(to right,#ff0000 0%,#ff0000 4%,#ffff00 19%,#00ff00 34%,#00ffff 50%,#0000ff 66%,#ff00ff 82%,#ff0000 97%,#ff0000 100%)"></div>
<div class="abs" style="left:1699.8px;top:326.8px;width:12.4px;height:12.4px;border-radius:50%;background:#ff5500;border:1.5px solid #f0f0f0"></div>
<div class="abs" style="left:1695px;top:357px;width:153px;height:32px;background:#805b48"></div>
<div class="btn" style="left:1864px;top:357px"></div>
<!--/COLORPANEL-->
<div id="bottombar">
<!--BOTTOM-->
<div id="l_sce" class="lbl" style="left:40.2px;top:18.8px;letter-spacing:-0.2px;color:#e0e0e0">SCENE</div>
<div class="btn" style="left:98px;top:8px;width:74px;border-radius:5px;border-color:#5f5f5f"></div>
<div id="t_world" class="txt" style="left:130.8px;top:16.8px;transform:scaleX(1.03);color:#ececec">World</div>
<div id="l_ori" class="lbl" style="left:1013.2px;top:18.8px;letter-spacing:0.4px">ORIENTATION</div>
<div class="abs" style="left:1112px;top:8px;width:32px;height:32px;border-radius:4px;background:#707070"></div>
<div class="abs" style="left:1255.4px;top:8px;width:2px;height:32px;background:#4c4c4c"></div>
<div class="btn" style="left:1272px;top:8px;width:71.5px;border-radius:5px;border-color:#5f5f5f"></div>
<div id="t_layer" class="txt" style="left:1305px;top:16.8px;color:#ececec">Layer</div>
<div class="abs" style="left:1360px;top:8px;width:32px;height:32px;border-radius:5px;background:#404040"></div>
<div class="abs" style="left:1408px;top:8px;width:32px;height:32px;border-radius:5px;background:#404040"></div>
<div class="seg" style="left:1456px;top:8px;width:97px;border-radius:5px"></div>
<div class="abs" style="left:1487.5px;top:8px;width:1.5px;height:32px;background:#585858"></div>
<div class="abs" style="left:1519.8px;top:8px;width:1.5px;height:32px;background:#585858"></div>
<div class="seg" style="left:1568px;top:8px;width:185px;border-radius:5px"></div>
<div class="abs" style="left:1642.8px;top:8px;width:1.5px;height:32px;background:#585858"></div>
<div class="abs" style="left:1676px;top:8px;width:1.5px;height:32px;background:#585858"></div>
<div id="t_group" class="txt" style="left:1600.8px;top:16.8px;color:#8e8e8e">Group</div>
<div id="t_merge" class="txt" style="left:1708.5px;top:16.8px;color:#8e8e8e">Merge</div>
<div class="seg" style="left:1768px;top:8px;width:64.5px;border-radius:5px"></div>
<div class="abs" style="left:1799px;top:8px;width:1.5px;height:32px;background:#585858"></div>
<div class="abs" style="left:1848px;top:8px;width:64.5px;height:32px;border-radius:5px;background:#252525;border:1px solid #4b4b4b"></div>
<div class="abs" style="left:1848px;top:8px;width:33px;height:32px;border-radius:5px 0 0 5px;background:#717171"></div>
<!--/BOTTOM-->
</div>
<!--ICONS-->
<svg id="icons" width="1920" height="1040" viewBox="0 0 1920 1040" style="left:0;top:0;pointer-events:none">
<!-- window controls -->
<g stroke="#000" stroke-width="1" fill="none" shape-rendering="crispEdges">
<path d="M1799.5 10.5h10"/>
<path d="M1844.500 7.500h7v7h-7z M1846.500 7.500v-2h7v7h-2"/>
</g>
<path d="M1890 5.500l10 10M1900 5.500l-10 10" stroke="#000" stroke-width="1.1" fill="none"/>
<!-- TOOL ICONS -->
<g fill="#d0d0d0">
<polygon points="36.900,95.100 49.300,106.300 42.500,107.250 36.900,112.100" fill="#2f8df3"/>
<polygon points="104,127.250 116.200,139.100 109.400,139.750 104,144.750" fill="#e6e6e6"/>
<!-- clay -->
<circle cx="40.050" cy="157.250" r="5.850"/><circle cx="46.400" cy="151.300" r="3.700"/>
<path d="M42.300 152.800L44.200 155.500L45.500 154.500Z"/>
<!-- eraser -->
<polygon points="43.900,198.700 50.200,204.800 42.400,212.600 36.900,205.900"/>
<path d="M37.200 205.600L33.400 210.400L37.500 214.400L41 211.300" fill="none" stroke="#d0d0d0" stroke-width="1"/>
<rect x="37.200" y="213.900" width="12.900" height="1"/>
<polygon points="60,218.100 60,225 53.100,225"/>
<!-- smudge -->
<path d="M46.800 251.200C49 251.100 50.300 252.700 49.900 254.600C49.300 257.500 45.500 262.500 43 265C41 267 38 267.400 36 266C33.800 264.300 33.700 261.300 35.200 259C37 256.300 43.500 251.400 46.800 251.200Z"/>
<polygon points="60,270.200 60,277.100 53.100,277.100"/>
<!-- half gear -->
<path d="M43 303.200A7.600 7.600 0 0 1 43 318.700Z"/>
<polygon points="41.800,302.500 40.400,302.200 38.700,304.800 35,305.200 35.800,308.700 33,310.900 35.800,313.200 35,316.800 38.700,317.100 40.400,319.700 41.800,319.400"/>
<!-- star circle -->
<circle cx="41" cy="364.100" r="8.200"/>
<polygon points="41.9,354.8 44.8,358.6 49.5,357.7 46.8,361.7 49.1,365.8 44.5,364.5 41.2,367.9 41.1,363.2 36.8,361.1 41.3,359.5" stroke="#323232" stroke-width="2.200" stroke-linejoin="miter" paint-order="stroke"/>
<polygon points="60,374.100 60,381 53.100,381"/>
<!-- balloon -->
<path d="M42.300 407.100C45.800 407 48.200 409.800 48.100 413C48 416.500 44 418.700 40 420.900L38.100 420.600C37 417 36.300 414 36.600 412C37 409 39.500 407.200 42.300 407.100Z"/>
<polygon points="37,421.400 39.700,421.100 40.100,423.500 37.400,422.700"/>
<!-- brush -->
<path d="M50.100 458.600C46 460.500 42.500 465 40.500 467.600L43.500 470C46 467 49.700 462 50.100 458.600Z"/>
<path d="M39 468.100C41 468.400 42.400 470.500 42.100 472C41.700 474 40 474.900 38.500 474.900L33.800 474.900C35.500 473.500 35.800 471.500 36.300 470C36.800 468.800 38 468.100 39 468.100Z"/>
</g>
<!-- selection action icons -->
<g fill="none" stroke="#d8d8d8">
<rect x="102.200" y="208.500" width="13.600" height="14" stroke-width="1" stroke-dasharray="2.100 1.300" stroke-dashoffset="1"/>
<path d="M109 211.500v8M105 215.500h8" stroke-width="1.500"/>
<rect x="150.300" y="208.500" width="13.400" height="14" stroke-width="1" stroke-dasharray="2.100 1.300" stroke-dashoffset="1"/>
<path d="M149.200 207.300L164.800 223.700" stroke-width="1.100"/>
<path d="M205 208.500h-6.500v14h6.500" stroke-width="1" stroke-dasharray="2.100 1.300"/>
</g>
<rect x="205.100" y="208" width="6.900" height="15" fill="#d8d8d8"/>
<path d="M200.200 215.500l2.600-2.600v1.900h2.300v1.400h-2.300v1.900z" fill="#d8d8d8"/>
<path d="M209.800 215.500l-2.600-2.600v1.900h-2.100v1.400h2.100v1.900z" fill="#252525"/>
<!-- lazy / steady -->
<g fill="none" stroke="#7c7c7c" stroke-width="1" stroke-linecap="round">
<path d="M107.300 279.900C110.500 281.300 116 281.400 119.500 279.600C116 281.500 109.500 286 109.200 289C109 291.500 112.500 292 114.500 290"/>
<circle cx="118.200" cy="289.600" r="4.200"/>
<circle cx="118.200" cy="289.600" r="0.700" fill="#7c7c7c"/>
<path d="M202.800 281.300C201.300 285 201.600 292 203.700 291.500C206.500 290.800 208.300 281 211.300 280.900C214 280.900 214.500 287 214.200 291.500"/>
</g>
<!-- placement icons -->
<g fill="#747474">
<path d="M124.300 521.500L120.100 518.500C119.700 517.600 120.800 516.800 121.700 517.400L124.700 519.300L123.800 512.300C123.700 511.100 125.500 510.800 125.800 512L127.300 517.200L127.900 510.700C128 509.500 129.800 509.500 129.900 510.700L130.300 517.200L131.900 511.700C132.200 510.600 133.900 510.900 133.800 512.100L132.900 518.300L136.300 514.700C137.100 513.900 138.400 514.800 137.800 515.800L134.300 521.800C133.600 525 131.500 526.900 129 526.900C126.600 526.900 124.900 524.500 124.300 521.500Z"/>
</g>
<g stroke="#fff" stroke-width="1.400" fill="#fff">
<path d="M177 520.300V514M177 520.300L169.500 524.800M177 520.300L184.500 524.800" fill="none"/>
<polygon points="177,510.600 179.300,514.200 174.700,514.200" stroke="none"/>
<polygon points="168,525.900 169.800,522 172.200,525.800" stroke="none"/>
<polygon points="186,525.900 184.200,522 181.800,525.800" stroke="none"/>
</g>
<g fill="none" stroke="#747474">
<circle cx="222.700" cy="518.100" r="5.900" stroke-width="1"/>
<path d="M228.400 510.600C233.300 514 233.700 520 231.200 523.300C232.500 519.500 231.800 514 228.400 510.600Z" fill="#747474" stroke-width="0.600"/>
</g>
<!-- eyedropper -->
<g>
<path d="M1881.200 371.600L1874 378.800" stroke="#dcdcdc" stroke-width="3.200" stroke-linecap="round" fill="none"/>
<path d="M1881.200 371.600L1874.100 378.700" stroke="#262626" stroke-width="1.300" stroke-linecap="round" fill="none"/>
<path d="M1881 368.700L1884.300 372" stroke="#dcdcdc" stroke-width="3.200" stroke-linecap="round" fill="none"/>
<path d="M1882.300 370.700L1886 367" stroke="#dcdcdc" stroke-width="3.600" stroke-linecap="round" fill="none"/>
</g>
<!-- BOTTOM BAR ICONS -->
<g fill="#cacaca">
<rect x="20.800" y="1008.100" width="6.200" height="3.800"/>
<rect x="23.300" y="1011.900" width="1.300" height="9.200"/>
<rect x="18.400" y="1016.100" width="11.700" height="1.400"/>
<rect x="18.400" y="1016.100" width="1.400" height="5"/>
<rect x="28.700" y="1016.100" width="1.400" height="5"/>
<rect x="17" y="1021.100" width="4.100" height="2.900"/>
<rect x="22" y="1021.100" width="4.100" height="2.900"/>
<rect x="27" y="1021.100" width="4.100" height="2.900"/>
</g>
<g id="globe1" fill="none" stroke="#d6d6d6" stroke-width="1.200">
<circle cx="113.500" cy="1015.500" r="8"/>
<ellipse cx="113.500" cy="1015.500" rx="4" ry="8" stroke-width="1"/>
<path d="M113.500 1007.500v16M105.500 1015.500h16M106.700 1011.500h13.600M106.700 1019.500h13.600" stroke-width="1"/>
</g>
<g fill="none" stroke="#d0d0d0" stroke-width="1.200">
<circle cx="1223.500" cy="1015.500" r="8"/>
<ellipse cx="1223.500" cy="1015.500" rx="4" ry="8" stroke-width="1"/>
<path d="M1223.500 1007.500v16M1215.500 1015.500h16M1216.700 1011.500h13.600M1216.700 1019.500h13.600" stroke-width="1"/>
</g>
<!-- orientation active icon -->
<g stroke="#fff" stroke-width="1.100" fill="none">
<path d="M1130.500 1016.500H1122M1131 1014.500L1134.800 1009.200M1131.500 1018.500L1134.500 1022.800"/>
<path d="M1126.200 1016.500L1131.800 1011.800L1133 1019.600Z" stroke-width="0.900"/>
<path d="M1126.200 1016.500L1130.300 1015.800L1131.800 1011.800M1130.300 1015.800L1133 1019.600" stroke-width="0.700"/>
<polygon points="1119.900,1016.500 1123,1014.300 1123,1018.700" fill="#fff" stroke="none"/>
<polygon points="1136.100,1007.200 1135.900,1011 1132.600,1008.900" fill="#fff" stroke="none"/>
<polygon points="1135.900,1024.600 1132.300,1023.500 1135.400,1020.900" fill="#fff" stroke="none"/>
</g>
<!-- axis icon -->
<g stroke="#d0d0d0" stroke-width="1.100" fill="none">
<path d="M1173.300 1018.400V1008.600M1173.300 1018.400H1183.400M1173.300 1018.400L1168.200 1023.400"/>
<path d="M1171.100 1011l2.200-2.600l2.200 2.600M1181.200 1016.200l2.500 2.200l-2.500 2.200M1168 1020.600v3.100h3.100"/>
</g>
<!-- layer icon -->
<g fill="#d4d4d4">
<polygon points="1287.800,1007 1296,1012.700 1287.800,1018.400 1279.700,1012.700"/>
<polygon points="1279.700,1018.700 1282.500,1016.800 1287.800,1020.500 1290,1019 1290,1023 1287.800,1024.700"/>
<circle cx="1292.500" cy="1020.800" r="5.200" fill="#252525"/>
<circle cx="1292.500" cy="1020.800" r="4.200"/>
<path d="M1292.500 1018.300v5M1290 1020.800h5" stroke="#252525" stroke-width="1.100"/>
</g>
<!-- duplicate (disabled) -->
<g fill="#6c6c6c">
<path d="M1368 1008h11.900v4h-7.900v7.900h-4z"/>
<rect x="1372.600" y="1012.600" width="11.600" height="11.400"/>
<path d="M1378.400 1014.800v7M1374.900 1018.300h7" stroke="#404040" stroke-width="1.300"/>
</g>
<g fill="#6c6c6c" stroke="#6c6c6c">
<polygon points="1416.500,1009.800 1416.500,1021.200 1421.800,1015.500" fill="none" stroke-width="1"/>
<polygon points="1431,1009.400 1431,1021.600 1425.200,1015.500" stroke="none"/>
<path d="M1423.500 1008v15.500" stroke-width="1" stroke-dasharray="1 1"/>
</g>
<!-- copy/cut/paste -->
<g fill="#717171" stroke="none">
<path d="M1464 1013.100h4.800v6.400h6.200v4.400h-11z"/>
<rect x="1469.400" y="1008.500" width="10.400" height="10.400" fill="none" stroke="#717171" stroke-width="1" stroke-dasharray="1 1"/>
<g fill="none" stroke="#717171" stroke-width="1.100">
<circle cx="1509.900" cy="1011.300" r="2.500"/><circle cx="1509.900" cy="1020.800" r="2.500"/>
<path d="M1496.200 1011.700L1508 1019.300M1496.200 1020.300L1508 1012.800" stroke-width="1.300"/>
</g>
<path d="M1529 1010h3.200v1.800h7.400v-1.800h3.300v14h-13.900z"/>
<path d="M1534 1010.300a1.900 1.900 0 0 1 3.800 0" fill="none" stroke="#717171" stroke-width="1"/>
<rect x="1532.900" y="1009.800" width="6" height="1.300"/>
</g>
<!-- group icon -->
<g fill="#717171">
<rect x="1577.700" y="1009.400" width="12.800" height="13.200" fill="none" stroke="#717171" stroke-width="1"/>
<path d="M1579.400 1011.100h6.700v2.500h-4.400v4.300h-2.300z"/>
<rect x="1582" y="1014" width="6.900" height="6.900"/>
</g>
<g fill="#666">
<rect x="1653.400" y="1009.400" width="12.800" height="13" fill="none" stroke="#666" stroke-width="1"/>
<path d="M1655.400 1011.100h6.700v2.500h-4.400v4.300h-2.300z"/>
<rect x="1658" y="1014" width="6.900" height="6.900"/>
<path d="M1651.700 1008L1667.700 1023.900" stroke="#3f3f3f" stroke-width="2.600"/>
<path d="M1651.700 1008L1667.700 1023.900" stroke="#717171" stroke-width="1"/>
</g>
<!-- merge icon -->
<g fill="none" stroke="#717171" stroke-width="1.700" stroke-linejoin="miter">
<path d="M1692 1009.200L1697.800 1013.200L1692 1017.200L1686.200 1013.200Z"/>
<path d="M1688.600 1016.600L1686.200 1018.500L1692 1022.700L1697.800 1018.500L1695.400 1016.600"/>
<path d="M1692 1013.500v5.500" stroke="#3f3f3f" stroke-width="3.600"/>
<path d="M1692 1013.800v3.400" stroke-width="1.400"/>
<polygon points="1689.900,1017 1694.100,1017 1692,1019.800" fill="#717171" stroke="none"/>
</g>
<!-- plus minus -->
<path d="M1784 1010.100v11.700M1778.200 1016h11.600M1810 1016h12" stroke="#717171" stroke-width="1.700" fill="none"/>
<!-- butterfly -->
<g fill="none" stroke="#fff" stroke-width="1.100" stroke-linecap="round" stroke-linejoin="round">
<path d="M1863.500 1007.800v16.200"/>
<path d="M1861.800 1013.200C1860 1011 1857.500 1009.500 1855.200 1009.300C1855.200 1012 1856.200 1015 1858.600 1016.200C1856.800 1017.200 1856.500 1020 1857.800 1021.800C1859 1023.300 1861 1023.500 1861.800 1022.300"/>
<path d="M1865.200 1013.200C1867 1011 1869.500 1009.500 1871.800 1009.300C1871.800 1012 1870.800 1015 1868.400 1016.200C1870.200 1017.200 1870.500 1020 1869.200 1021.800C1868 1023.300 1866 1023.500 1865.200 1022.300"/>
</g>
<!-- mirror squares -->
<rect x="1887" y="1012" width="6.900" height="7.100" fill="#dadada"/>
<rect x="1897.500" y="1012.500" width="6.200" height="6.200" fill="none" stroke="#dadada" stroke-width="1"/>
<path d="M1895.500 1008v15.200" stroke="#dadada" stroke-width="1" stroke-dasharray="1 1" fill="none"/>
</svg>
<!--/ICONS-->
</body>
</html>
